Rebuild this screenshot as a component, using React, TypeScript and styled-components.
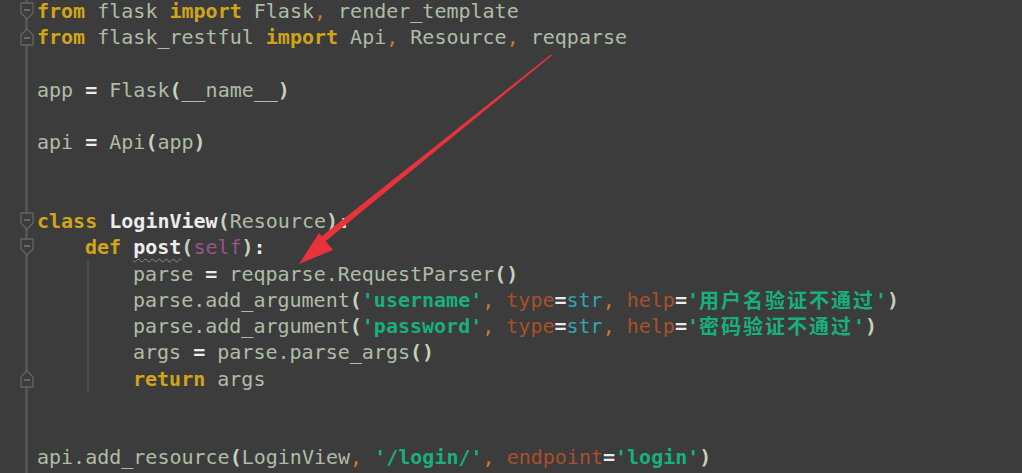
import React from 'react';
import styled, { createGlobalStyle } from 'styled-components';

type Kind = 'kw' | 'id' | 'op' | 'str' | 'cm' | 'param' | 'self' | 'bi' | 'name' | 'paren' | 'cjk';
type Token = [string, Kind];
type Fold = 'start' | 'end' | null;

interface Line {
    tokens: Token[]
    fold: Fold
    indent: number
}

const GlobalStyle = createGlobalStyle`
    html, body {
        margin : 0;
        padding : 0;
        background : #3c3c3c;
        overflow : hidden;
    }
    #root {
        width : 1022px;
        height : 473px;
    }
`;

const Editor = styled.div`
    position : relative;
    display : flex;
    width : 1022px;
    height : 473px;
    background : #3c3c3c;
    overflow : hidden;
`;
const Gutter = styled.div`
    display : flex;
    flex-direction : column;
    width : 38px;
    margin-top : -2px;
    flex-shrink : 0;
    background : linear-gradient(to right, transparent 25px, #535353 25px, #535353 28px, transparent 28px);
`;
const GutterRow = styled.div`
    height : 26.25px;
    display : flex;
    align-items : center;
    padding-left : 20px;
`;
const Code = styled.div`
    display : flex;
    flex-direction : column;
    margin-top : -2px;
    margin-left : -1px;
    font-family : "DejaVu Sans Mono", "Liberation Mono", monospace;
    font-size : 20px;
    color : #aebca6;
`;
const CodeLine = styled.div`
    height : 26.25px;
    line-height : 26.25px;
    white-space : pre;
    display : flex;
    align-items : center;
`;
const Indent = styled.span<{ $guide: boolean }>`
    display : inline-block;
    width : 48px;
    height : 26.25px;
    align-self : stretch;
    background : ${p => p.$guide ? 'linear-gradient(to right, transparent 2px, #4e4e4e 2px, #4e4e4e 4px, transparent 4px)' : 'none'};
`;
const Tok = styled.span<{ $kind: Kind }>`
    font-weight : ${p => ['kw', 'str', 'op', 'name', 'paren', 'cjk'].includes(p.$kind) ? 700 : 400};
    color : ${p => ({
        kw : '#d1a517',
        id : '#aebca6',
        op : '#ececec',
        str : '#17b07c',
        cm : '#cc7832',
        param : '#a9502a',
        self : '#94558d',
        bi : '#2ea7b2',
        name : '#ececec',
        paren : '#c4d2bc',
        cjk : '#17b07c',
    } as Record<Kind, string>)[p.$kind]};
    ${p => p.$kind === 'cjk' ? `
        font-family : "Noto Sans CJK SC", sans-serif;
        letter-spacing : 2px;
    ` : ''}
`;
const Squiggle = styled.span`
    font-weight : 700;
    color : #ececec;
    text-decoration : underline wavy #8a8a8a;
    text-decoration-thickness : 1px;
    text-underline-offset : 4px;
`;
const Overlay = styled.svg`
    position : absolute;
    left : 0;
    top : 0;
    pointer-events : none;
`;

const lines: Line[] = [
    { fold : 'start', indent : 0, tokens : [['from', 'kw'], [' flask ', 'id'], ['import', 'kw'], [' Flask', 'id'], [',', 'cm'], [' render_template', 'id']] },
    { fold : 'end', indent : 0, tokens : [['from', 'kw'], [' flask_restful ', 'id'], ['import', 'kw'], [' Api', 'id'], [',', 'cm'], [' Resource', 'id'], [',', 'cm'], [' reqparse', 'id']] },
    { fold : null, indent : 0, tokens : [] },
    { fold : null, indent : 0, tokens : [['app ', 'id'], ['=', 'op'], [' Flask', 'id'], ['(', 'paren'], ['__name__', 'id'], [')', 'paren']] },
    { fold : null, indent : 0, tokens : [] },
    { fold : null, indent : 0, tokens : [['api ', 'id'], ['=', 'op'], [' Api', 'id'], ['(', 'paren'], ['app', 'id'], [')', 'paren']] },
    { fold : null, indent : 0, tokens : [] },
    { fold : null, indent : 0, tokens : [] },
    { fold : 'start', indent : 0, tokens : [['class', 'kw'], [' ', 'id'], ['LoginView', 'name'], ['(', 'paren'], ['Resource', 'id'], [')', 'paren'], [':', 'op']] },
    { fold : 'start', indent : 1, tokens : [['def', 'kw'], [' ', 'id'], ['post', 'name'], ['(', 'paren'], ['self', 'self'], [')', 'paren'], [':', 'op']] },
    { fold : null, indent : 2, tokens : [['parse ', 'id'], ['=', 'op'], [' reqparse.RequestParser', 'id'], ['()', 'paren']] },
    { fold : null, indent : 2, tokens : [['parse.add_argument', 'id'], ['(', 'paren'], ["'username'", 'str'], [',', 'cm'], [' ', 'id'], ['type', 'param'], ['=', 'op'], ['str', 'bi'], [',', 'cm'], [' ', 'id'], ['help', 'param'], ['=', 'op'], ["'", 'str'], ['用户名验证不通过', 'cjk'], ["'", 'str'], [')', 'paren']] },
    { fold : null, indent : 2, tokens : [['parse.add_argument', 'id'], ['(', 'paren'], ["'password'", 'str'], [',', 'cm'], [' ', 'id'], ['type', 'param'], ['=', 'op'], ['str', 'bi'], [',', 'cm'], [' ', 'id'], ['help', 'param'], ['=', 'op'], ["'", 'str'], ['密码验证不通过', 'cjk'], ["'", 'str'], [')', 'paren']] },
    { fold : null, indent : 2, tokens : [['args ', 'id'], ['=', 'op'], [' parse.parse_args', 'id'], ['()', 'paren']] },
    { fold : 'end', indent : 2, tokens : [['return', 'kw'], [' args', 'id']] },
    { fold : null, indent : 0, tokens : [] },
    { fold : null, indent : 0, tokens : [] },
    { fold : null, indent : 0, tokens : [['api.add_resource', 'id'], ['(', 'paren'], ['LoginView', 'id'], [',', 'cm'], [' ', 'id'], ["'/login/'", 'str'], [',', 'cm'], [' ', 'id'], ['endpoint', 'param'], ['=', 'op'], ["'login'", 'str'], [')', 'paren']] },
];

const FoldMark: React.FC<{ type: Fold }> = ({ type }) => {
    if (!type) return null;
    const d = type === 'start'
        ? 'M1 1 H13 V11 L7 17 L1 11 Z'
        : 'M1 17 H13 V7 L7 1 L1 7 Z';
    const y = type === 'start' ? 8 : 10;
    return (
        <svg width="14" height="18" viewBox="0 0 14 18">
            <path d={d} fill="#3c3c3c" stroke="#646464" strokeWidth="1.3" strokeLinejoin="round" />
            <line x1="4" y1={y} x2="10" y2={y} stroke="#787878" strokeWidth="1.5" />
        </svg>
    );
};

const App: React.FC = () => {
    return (
        <React.Fragment>
            <GlobalStyle />
            <Editor>
                <Gutter>
                    {lines.map((l, i) => (
                        <GutterRow key={i}>
                            <FoldMark type={l.fold} />
                        </GutterRow>
                    ))}
                </Gutter>
                <Code>
                    {lines.map((l, i) => (
                        <CodeLine key={i}>
                            {Array.from({ length: l.indent }).map((_, k) => (
                                <Indent key={k} $guide={k === 1 && i >= 10 && i <= 14} />
                            ))}
                            {l.tokens.map(([text, kind], k) => (
                                text === 'post'
                                    ? <Squiggle key={k}>{text}</Squiggle>
                                    : <Tok key={k} $kind={kind}>{text}</Tok>
                            ))}
                        </CodeLine>
                    ))}
                </Code>
                <Overlay width="1022" height="473" viewBox="0 0 1022 473">
                    <polygon points="551,54.5 552,55.5 321,245 317,240" fill="#e8323c" />
                    <polygon points="299,264 319,233 333,250" fill="#e8323c" />
                </Overlay>
            </Editor>
        </React.Fragment>
    );
};

export default App;
